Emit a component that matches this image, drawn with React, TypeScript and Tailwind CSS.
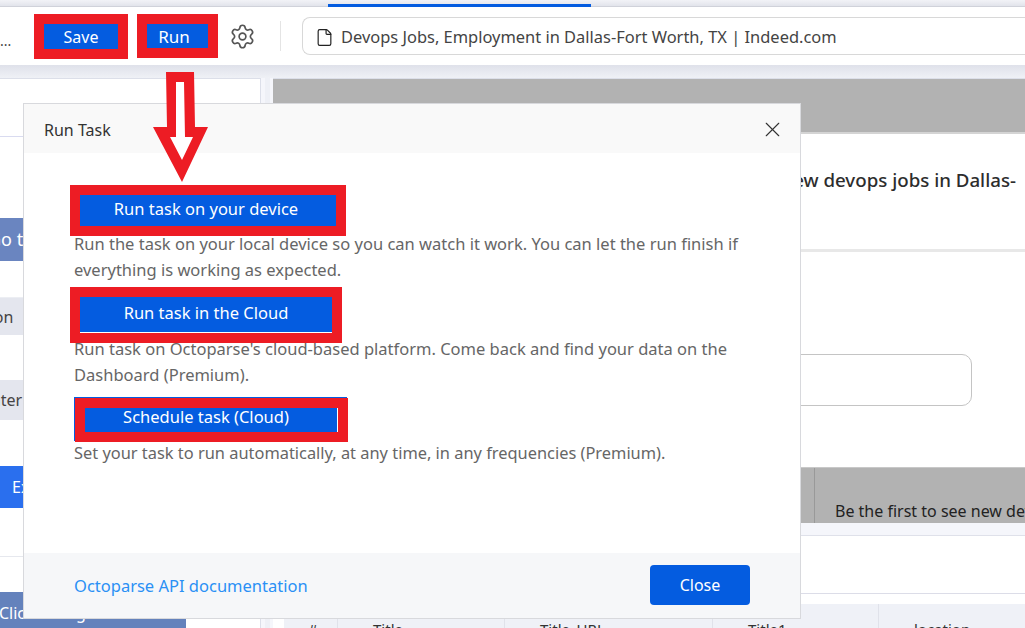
import { File, Settings, X } from "lucide-react";

const RED = "border-[#ed1c24]";

function Sidebar() {
  return (
    <aside className="flex w-[261px] shrink-0 flex-col overflow-hidden border-r border-t border-[#dcdfe9] bg-white">
      <div className="h-[58px] shrink-0 border-b border-[#d9dbf0]" />
      <div className="h-[81px] shrink-0" />
      <div className="h-[43px] w-[90px] shrink-0 rounded-r bg-[#6a85c0] text-[18px] leading-[43px] text-white">
        <span className="-ml-[12px] block">Go to</span>
      </div>
      <div className="mt-[36px] h-[38px] shrink-0 border-t border-[#eceef3] bg-[#e4e6ee] text-[16px] leading-[38px] text-[#444]">
        <span className="-ml-[38px] block">Button</span>
      </div>
      <div className="mt-[45px] h-[40px] shrink-0 bg-[#e4e6ee] text-[16px] leading-[40px] text-[#444]">
        <span className="-ml-[18px] block">Enter</span>
      </div>
      <div className="mt-[46px] h-[42px] w-[90px] shrink-0 rounded-r bg-[#2a6fee] pl-[12px] text-[16px] leading-[42px] text-white">
        Ex
      </div>
      <div className="mt-[48px] h-px shrink-0 bg-[#e6e8ee]" />
      <div className="mt-[35px] h-[36px] w-[186px] shrink-0 bg-[#6482bc] text-[16px] leading-[42px] text-white">
        <span className="-ml-[1px] block">Click to Paginate</span>
      </div>
    </aside>
  );
}

function Workspace() {
  return (
    <section className="flex min-w-0 flex-1 flex-col border-t border-[#dcdfe9] bg-white font-['Noto_Sans',sans-serif]">
      <div className="h-[55px] shrink-0 border-b-2 border-[#d4d4d4] bg-[#b2b2b2]" />
      <div className="flex h-[118px] shrink-0 items-start justify-end border-b-[3px] border-[#e8e8e8] pr-[9px] pt-[32px] text-[18.7px] font-medium leading-[28px] text-[#2d2d2d]">
        <span className="whitespace-nowrap">Be the first to see new devops jobs in Dallas-</span>
      </div>
      <div className="flex h-[215px] shrink-0 justify-end pr-[53px] pt-[102px]">
        <div className="h-[52px] w-[500px] rounded-[10px] border border-[#c4c4c4]" />
      </div>
      <div className="flex h-[56px] shrink-0 border-t border-[#c8c8c8] bg-[#b2b2b2]">
        <div className="w-[542px] shrink-0 border-r border-[#999]" />
        <div className="overflow-hidden whitespace-nowrap pl-[20px] pt-[31px] text-[16px] leading-[24px] text-[#222]">
          Be the first to see new devops
        </div>
      </div>
      <div className="h-[13px] shrink-0 border-b border-[#dfe1ea] bg-[#f5f6fb]" />
      <div className="h-[58px] shrink-0 border-b border-[#dcdde8]" />
      <div className="h-[10px] shrink-0" />
      <div className="ml-[11px] grid flex-1 grid-cols-[54px_167px_208px_166px_1fr] bg-[#eff1f7] text-[15px] text-[#333]">
        <div className="border-r border-[#e0e2ea] pl-[24px] pt-[14px]">#</div>
        <div className="border-r border-[#e0e2ea] pl-[35px] pt-[14px]">Title</div>
        <div className="border-r border-[#e0e2ea] pl-[35px] pt-[14px]">Title_URL</div>
        <div className="border-r border-[#e0e2ea] pl-[35px] pt-[14px]">Title1</div>
        <div className="pl-[35px] pt-[14px]">location</div>
      </div>
    </section>
  );
}

function RunOption({ label, className }: { label: string; className: string }) {
  return (
    <button
      className={`relative z-10 block shrink-0 border-[10px] ${RED} bg-[#045ce0] text-center text-[16.5px] leading-none text-white ${className}`}
    >
      {label}
    </button>
  );
}

function RunTaskDialog() {
  return (
    <div className="absolute left-[24px] top-[104px] flex h-[514px] w-[776px] flex-col bg-white font-['Noto_Sans',sans-serif] text-[16.5px] shadow-[0_0_0_1px_#d8d9dd]">
      <div className="flex h-[49px] shrink-0 items-center justify-between bg-[#f9f9f9] pl-[20px] pr-[15px] pt-[2px]">
        <span className="text-[16px] text-[#333]">Run Task</span>
        <X size={25} strokeWidth={1.1} className="text-[#333]" />
      </div>
      <div className="flex flex-1 flex-col pl-[50px] pt-[32px] leading-[26px] text-[#666]">
        <RunOption label="Run task on your device" className="-ml-[4px] h-[51px] w-[276px] pb-[3px] pr-[4px]" />
        <p className="-mt-[5px] w-[680px]">
          Run the task on your local device so you can watch it work. You can let the run finish if everything is
          working as expected.
        </p>
        <RunOption
          label="Run task in the Cloud"
          className="-ml-[4px] mt-[4px] h-[56px] w-[272px] pb-[3px] shadow-[inset_0_-1px_0_#fff]"
        />
        <p className="-mt-[7px] w-[680px]">
          Run task on Octoparse's cloud-based platform. Come back and find your data on the Dashboard (Premium).
        </p>
        <RunOption
          label="Schedule task (Cloud)"
          className="ml-[1px] mt-[10px] h-[44px] w-[273px] pb-[5px] pr-[11px] shadow-[inset_-1px_0_0_#fff,-1px_-1px_0_#045ce0]"
        />
        <p className="-mt-[2px] text-[16.4px]">
          Set your task to run automatically, at any time, in any frequencies (Premium).
        </p>
      </div>
      <div className="flex h-[65px] shrink-0 items-center justify-between bg-[#f6f7f9] pb-[2px] pl-[50px] pr-[50px]">
        <a className="pt-[3px] text-[#2a90f5]">Octoparse API documentation</a>
        <button className="h-[40px] w-[100px] rounded bg-[#045ce0] pt-px text-[16px] text-white">Close</button>
      </div>
    </div>
  );
}

export default function App() {
  return (
    <div className="relative flex h-[628px] w-[1025px] flex-col overflow-hidden bg-[#eef0f6] font-['Noto_Sans',sans-serif]">
      <div className="relative h-[7px] shrink-0 border-b border-[#d0d2da] bg-linear-to-b from-[#f2f3f7] to-[#e2e4eb]">
        <div className="absolute bottom-[-1px] left-[328px] h-[3px] w-[263px] bg-[#045ce0]" />
      </div>
      <header className="flex h-[58px] shrink-0 items-center bg-white">
        <span className="w-[34px] shrink-0 pt-[10px] text-[14px] leading-none text-[#444]">...</span>
        <button
          className={`h-[45px] w-[94px] border-[10px] pt-[1px] ${RED} bg-[#045ce0] text-[16px] leading-none text-white`}
        >
          Save
        </button>
        <button
          className={`ml-[9px] h-[44px] w-[81px] border-[10px] pr-[7px] ${RED} bg-[#045ce0] text-[17px] leading-none text-white`}
        >
          Run
        </button>
        <Settings size={27} strokeWidth={1.5} className="ml-[11px] shrink-0 text-[#555]" />
        <div className="ml-[24px] h-[30px] w-px shrink-0 bg-[#e4e4e4]" />
        <div className="ml-[21px] flex h-[38px] flex-1 items-center overflow-hidden whitespace-nowrap rounded-l-[8px] border border-r-0 border-[#d8d8d8] pl-[12px] pt-[2px] text-[16.45px] text-[#444]">
          <File size={19} strokeWidth={1.5} className="mr-[7px] shrink-0 text-[#222]" />
          Devops Jobs, Employment in Dallas-Fort Worth, TX | Indeed.com
        </div>
      </header>
      <div className="h-[13px] shrink-0 bg-linear-to-b from-[#dfe1ea] to-[#eff1f6]" />
      <main className="flex min-h-0 flex-1">
        <Sidebar />
        <div className="w-[4px] shrink-0 bg-[#f5f6fb]" />
        <div className="w-[5px] shrink-0" />
        <div className="w-[3px] shrink-0 bg-[#f5f6fb]" />
        <Workspace />
      </main>
      <RunTaskDialog />
      {/* red annotation arrow */}
      <svg className="absolute left-[150px] top-[70px] z-20" width="62" height="115" viewBox="0 0 62 115">
        <path d="M16 2 L44 2 L45 57 L58 57 L32 112 L3 57 L17 57 Z" fill="#ed1c24" />
        <path d="M26 12 L34 12 L35 67 L43 67 L32 90 L20 67 L26 67 Z" fill="#fff" />
      </svg>
    </div>
  );
}
